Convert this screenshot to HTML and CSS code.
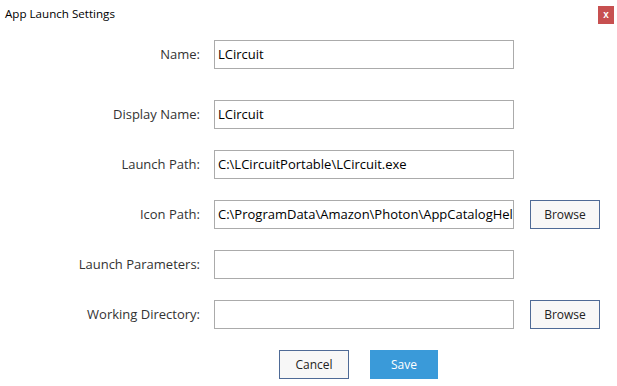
FILE: index.html
```html
<!DOCTYPE html>
<html>
<head>
<meta charset="utf-8">
<link rel="stylesheet" href="styles.css">
</head>
<body>
<div class="dialog">
  <div class="titlebar">
    <span class="title">App Launch Settings</span>
    <button class="close">x</button>
  </div>
  <div class="form">
    <label class="lbl">Name:</label>
    <div class="field">LCircuit</div>
    <div class="spacer"></div>

    <label class="lbl">Display Name:</label>
    <div class="field">LCircuit</div>
    <div class="spacer"></div>

    <label class="lbl">Launch Path:</label>
    <div class="field">C:\LCircuitPortable\LCircuit.exe</div>
    <div class="spacer"></div>

    <label class="lbl">Icon Path:</label>
    <div class="field">C:\ProgramData\Amazon\Photon\AppCatalogHelper\AppIcons\LCircuit.png</div>
    <button class="btn browse">Browse</button>

    <label class="lbl">Launch Parameters:</label>
    <div class="field"></div>
    <div class="spacer"></div>

    <label class="lbl">Working Directory:</label>
    <div class="field"></div>
    <button class="btn browse">Browse</button>
  </div>
  <div class="actions">
    <button class="btn cancel">Cancel</button>
    <button class="btn save">Save</button>
  </div>
</div>
</body>
</html>
```
FILE: styles.css
```css
html, body {
  margin: 0;
  padding: 0;
  background: #ffffff;
}
body {
  font-family: "Open Sans", "Noto Sans", sans-serif;
  font-size: 13px;
  color: #000;
}
.dialog {
  width: 617px;
  height: 386px;
  display: flex;
  flex-direction: column;
}
.titlebar {
  display: flex;
  justify-content: space-between;
  align-items: flex-start;
  height: 40px;
  padding: 0 3px 0 5px;
  box-sizing: border-box;
}
.title {
  font-size: 11.6px;
  line-height: 16px;
  margin-top: 6px;
  color: #000;
}
.close {
  margin-top: 6px;
  width: 16px;
  height: 18px;
  padding: 0;
  border: none;
  background: #c75050;
  color: #fff;
  font-family: "Liberation Sans", sans-serif;
  font-weight: bold;
  font-size: 10px;
  line-height: 18px;
  text-align: center;
}
.form {
  display: grid;
  grid-template-columns: 200px 300px 70px;
  grid-template-rows: 39px repeat(5, 29px);
  column-gap: 14px;
  row-gap: 21px;
  align-items: start;
}
.lbl {
  height: 29px;
  line-height: 29px;
  text-align: right;
  color: #333;
  font-size: 13px;
}
.field {
  height: 29px;
  box-sizing: border-box;
  border: 1px solid #ababab;
  padding: 0 3px;
  line-height: 27px;
  font-size: 13px;
  color: #000;
  white-space: nowrap;
  overflow: hidden;
}
.btn {
  font-family: "Open Sans", "Noto Sans", sans-serif;
  font-size: 12px;
  box-sizing: border-box;
  height: 29px;
  padding: 0;
  border: 1px solid #4e6a96;
  background: #f7f7f7;
  color: #222;
}
.browse {
  width: 70px;
  margin-left: 2px;
}
.actions {
  display: flex;
  gap: 21px;
  padding-left: 279px;
  margin-top: 21px;
}
.cancel {
  width: 70px;
}
.save {
  width: 68px;
  border: none;
  background: #3a9ad9;
  color: #fff;
}
```
